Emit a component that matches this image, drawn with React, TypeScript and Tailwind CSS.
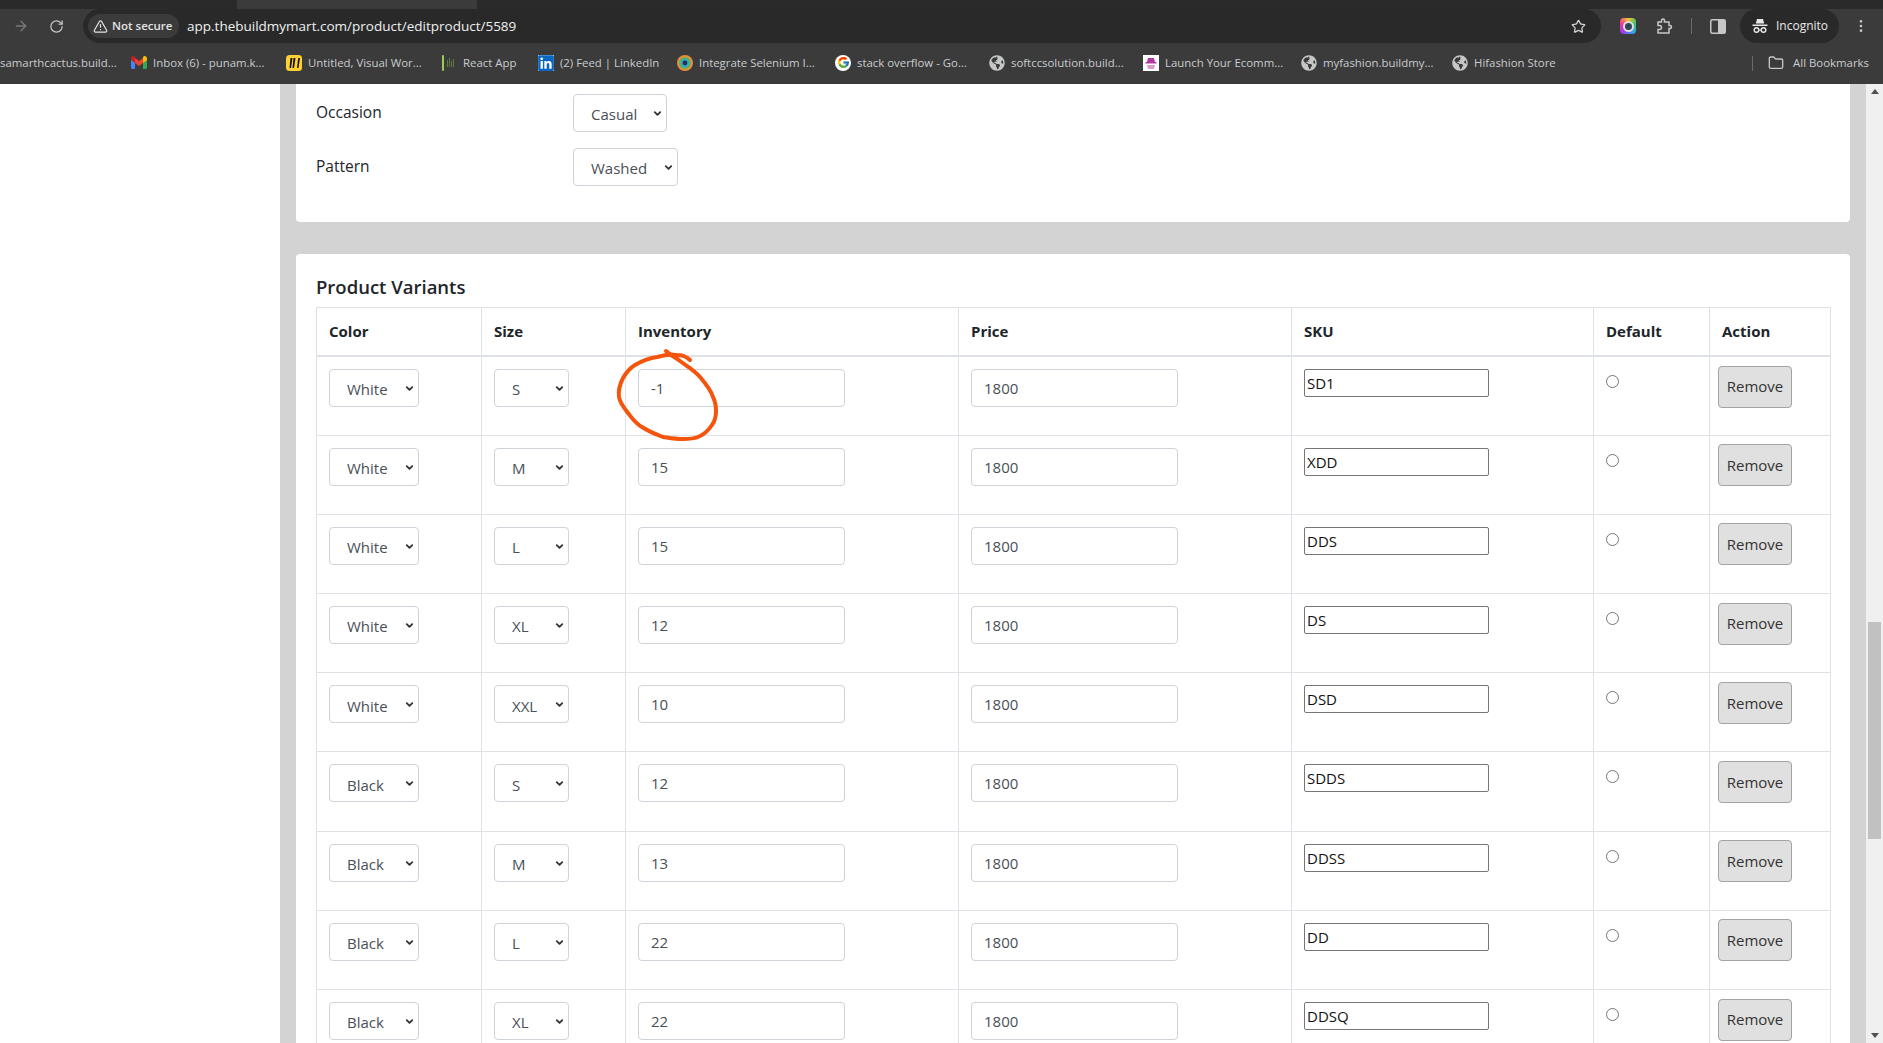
import {
  ArrowRight,
  ChevronDown,
  EllipsisVertical,
  Folder,
  RotateCw,
  Star,
  TriangleAlert,
} from "lucide-react";
import type { ReactNode } from "react";
import { FaGlobeAmericas, FaLinkedin } from "react-icons/fa";
import { FcGoogle } from "react-icons/fc";

const Globe = () => (
  <span className="flex h-4 w-4 shrink-0 items-center justify-center rounded-full bg-[#3b3b3b] text-[#c4c7c5]">
    <FaGlobeAmericas size={16} />
  </span>
);

const GmailIcon = () => (
  <svg width="16" height="13" viewBox="0 0 16 13" className="shrink-0">
    <path d="M0 2v9.5C0 12.3.7 13 1.5 13H4V6z" fill="#4285f4" />
    <path d="M16 2v9.5c0 .8-.7 1.5-1.5 1.5H12V6z" fill="#34a853" />
    <path d="M4 7V2l4 3 4-3v5L8 10z" fill="#ea4335" />
    <path d="M0 2.5C0 .6 2-.6 3.400.4L4 .9V7L0 4z" fill="#c5221f" />
    <path d="M16 2.500C16 .6 14-.6 12.600.4L12 .9V7l4-3z" fill="#fbbc04" />
  </svg>
);

const MiroIcon = () => (
  <svg width="16" height="16" viewBox="0 0 16 16" className="shrink-0">
    <rect width="16" height="16" rx="3.500" fill="#ffd02f" />
    <path d="M10.500 3h2l-1 4.500L13.500 3h-1.200L11 13h1.500l1.500-10M7.500 3h2L8 13H6.500zM4.500 3h2L5 13H3.500z" fill="#111" />
  </svg>
);

const ReactAppIcon = () => (
  <svg width="16" height="16" viewBox="0 0 16 16" className="shrink-0">
    <rect x="1" y="0" width="2" height="16" rx="1" fill="#9ccc55" />
    <path d="M6 5h1v7H6zM8 3h1v9H8zM10 6h1v6h-1zM12 4h1v8h-1z" fill="#5d7a3c" />
  </svg>
);

const SeleniumIcon = () => (
  <svg width="16" height="16" viewBox="0 0 16 16" className="shrink-0">
    <circle cx="8" cy="8" r="8" fill="#ef8b3a" />
    <circle cx="8" cy="8" r="6" fill="#57b45a" />
    <circle cx="8" cy="8" r="4.200" fill="#35a3d8" />
    <circle cx="8" cy="8" r="2.400" fill="#26364a" />
  </svg>
);

const LaunchIcon = () => (
  <svg width="16" height="16" viewBox="0 0 16 16" className="shrink-0">
    <rect width="16" height="16" fill="#fff" />
    <path d="M4 7l1-4h6l1 4zM2.500 7h11v1.500h-11z" fill="#b0389e" />
    <path d="M4 10h8l-1 4H5z" fill="#d79bd0" />
  </svg>
);

const bookmarks: { icon: ReactNode; label: string; width: string }[] = [
  { icon: <GmailIcon />, label: "Inbox (6) - punam.k...", width: "w-[155px]" },
  { icon: <MiroIcon />, label: "Untitled, Visual Wor...", width: "w-[155px]" },
  { icon: <ReactAppIcon />, label: "React App", width: "w-[97px]" },
  {
    icon: (
      <span className="flex h-4 w-4 shrink-0 items-center justify-center bg-white text-[#0a66c2]">
        <FaLinkedin size={18} />
      </span>
    ),
    label: "(2) Feed | LinkedIn",
    width: "w-[139px]",
  },
  { icon: <SeleniumIcon />, label: "Integrate Selenium I...", width: "w-[158px]" },
  {
    icon: (
      <span className="flex h-4 w-4 shrink-0 items-center justify-center rounded-full bg-white">
        <FcGoogle size={13} />
      </span>
    ),
    label: "stack overflow - Go...",
    width: "w-[154px]",
  },
  { icon: <Globe />, label: "softccsolution.build...", width: "w-[154px]" },
  { icon: <LaunchIcon />, label: "Launch Your Ecomm...", width: "w-[158px]" },
  { icon: <Globe />, label: "myfashion.buildmy...", width: "w-[151px]" },
  { icon: <Globe />, label: "Hifashion Store", width: "w-[110px]" },
];

const variants = [
  { color: "White", size: "S", inventory: "-1", sku: "SD1" },
  { color: "White", size: "M", inventory: "15", sku: "XDD" },
  { color: "White", size: "L", inventory: "15", sku: "DDS" },
  { color: "White", size: "XL", inventory: "12", sku: "DS" },
  { color: "White", size: "XXL", inventory: "10", sku: "DSD" },
  { color: "Black", size: "S", inventory: "12", sku: "SDDS" },
  { color: "Black", size: "M", inventory: "13", sku: "DDSS" },
  { color: "Black", size: "L", inventory: "22", sku: "DD" },
  { color: "Black", size: "XL", inventory: "22", sku: "DDSQ" },
];

function Select({ value, width }: { value: string; width: string }) {
  return (
    <div className={`relative ${width}`}>
      <select
        defaultValue={value}
        className="block h-[38px] w-full appearance-none rounded border border-[#ced4da] bg-white pl-[17px] pt-[3px] text-[15px] text-[#495057]"
      >
        <option>{value}</option>
      </select>
      <ChevronDown
        size={11}
        strokeWidth={4}
        className="pointer-events-none absolute right-[4px] top-[14px] text-[#333]"
      />
    </div>
  );
}

function TextInput({ value }: { value: string }) {
  return (
    <input
      type="text"
      defaultValue={value}
      className="block h-[38px] w-[207px] rounded border border-[#ced4da] bg-white px-3 text-[15px] text-[#495057]"
    />
  );
}

function VariantRow({ variant }: { variant: (typeof variants)[number] }) {
  return (
    <tr className="h-[79.2px]">
      <td className="border border-[#dee2e6] p-3 align-top">
        <Select value={variant.color} width="w-[90px]" />
      </td>
      <td className="border border-[#dee2e6] p-3 align-top">
        <Select value={variant.size} width="w-[75px]" />
      </td>
      <td className="border border-[#dee2e6] p-3 align-top">
        <TextInput value={variant.inventory} />
      </td>
      <td className="border border-[#dee2e6] p-3 align-top">
        <TextInput value="1800" />
      </td>
      <td className="border border-[#dee2e6] p-3 align-top">
        <input
          type="text"
          defaultValue={variant.sku}
          className="block h-[28px] w-[185px] rounded-[2px] border border-[#767676] bg-white px-[2px] text-[15px] text-[#111]"
        />
      </td>
      <td className="border border-[#dee2e6] p-3 align-top">
        <input
          type="radio"
          name="default-variant"
          className="mt-[6px] block h-[13px] w-[13px] appearance-none rounded-full border border-[#767676] bg-white"
        />
      </td>
      <td className="border border-[#dee2e6] pl-2 pt-[8.5px] align-top">
        <button
          type="button"
          className="block h-[42px] w-[74px] rounded border border-[#a3a3a3] bg-[#e0e0e0] text-[15px] text-[#333]"
        >
          Remove
        </button>
      </td>
    </tr>
  );
}

function BrowserChrome() {
  return (
    <header className="shrink-0 bg-[#3b3b3b] font-['Open_Sans',sans-serif]">
      <div className="h-[9px] bg-[#2a2a2a]">
        <div className="ml-[237px] h-full w-[240px] bg-[#3b3b3b]" />
      </div>
      <div className="flex h-[34px] items-center">
        <div className="flex w-[83px] items-center gap-5 pl-[13px]">
          <ArrowRight size={16} className="text-[#7a7a7a]" />
          <RotateCw size={15} className="text-[#c7c7c7]" />
        </div>
        <div className="flex h-full w-[1518px] items-center rounded-full bg-[#292929] pl-[5px] pr-[15px]">
          <div className="flex h-6 w-[91px] items-center gap-1 rounded-full bg-[#3b3b3b] pl-[5px] text-[11.500px] font-semibold text-[#e3e3e3]">
            <TriangleAlert size={15} className="shrink-0" />
            Not secure
          </div>
          <span className="ml-2 text-[13.500px] text-[#eef0f2]">
            app.thebuildmymart.com/product/editproduct/5589
          </span>
          <Star size={15} className="ml-auto text-[#d5d5d5]" />
        </div>
        <span className="ml-[19px] flex h-4 w-4 items-center justify-center rounded bg-[conic-gradient(#f6c02c,#3ac569,#2ea6f0,#9a3df0,#f0349a,#f6c02c)]">
          <span className="h-[11px] w-[11px] rounded-full border-2 border-[#dddddd] bg-[#2f4658]" />
        </span>
        <svg width="16" height="16" viewBox="0 0 16 16" fill="none" stroke="#c7c7c7" strokeWidth="1.500" className="ml-[21px]">
          <path d="M1 4h3.500V2.500a1.500 1.500 0 0 1 3 0V4H12v3.500h1a1.500 1.500 0 0 1 0 3h-1V15H1v-3.500h1.500a2 2 0 0 0 0-4H1z" />
        </svg>
        <span className="ml-[18px] h-4 w-px bg-[#6a6a6a]" />
        <svg width="16" height="15" viewBox="0 0 16 15" className="ml-[18px]">
          <rect x="0.750" y="0.750" width="14.500" height="13.500" rx="1.500" fill="none" stroke="#c7c7c7" strokeWidth="1.500" />
          <rect x="8" y="1" width="7" height="13" fill="#c7c7c7" />
        </svg>
        <div className="ml-[14px] flex h-full w-[99px] items-center gap-[8px] rounded-full bg-[#292929] pl-[12px] text-[12px] text-[#e8e8e8]">
          <svg width="16" height="16" viewBox="0 0 16 16" fill="#e8e8e8" className="shrink-0">
            <path d="M5 1h6l1.200 4.500H3.800zM0.500 6.500h15V8H.5z" />
            <circle cx="4.500" cy="12" r="2.300" fill="none" stroke="#e8e8e8" strokeWidth="1.400" />
            <circle cx="11.500" cy="12" r="2.300" fill="none" stroke="#e8e8e8" strokeWidth="1.400" />
            <path d="M6.500 11.500h3v1h-3z" />
          </svg>
          Incognito
        </div>
        <EllipsisVertical size={16} className="ml-[14px] text-[#c7c7c7]" />
      </div>
      <div className="flex h-[41px] items-center whitespace-nowrap pb-px text-[11.400px] text-[#c9ccd0]">
        <div className="w-[131px] overflow-hidden pr-5 text-right">samarthcactus.build...</div>
        {bookmarks.map((bookmark) => (
          <div key={bookmark.label} className={`flex items-center gap-[6px] ${bookmark.width}`}>
            {bookmark.icon}
            <span>{bookmark.label}</span>
          </div>
        ))}
        <span className="ml-auto h-[15px] w-px bg-[#6a6a6a]" />
        <Folder size={16} className="ml-[15px] text-[#c7c7c7]" />
        <span className="ml-[9px] pr-[14px]">All Bookmarks</span>
      </div>
    </header>
  );
}

export default function App() {
  return (
    <div className="relative flex h-[1043px] w-full flex-col overflow-hidden bg-white font-['Open_Sans',sans-serif]">
      <BrowserChrome />
      <div className="flex min-h-0 flex-1">
        <aside className="w-[280px] shrink-0 bg-white" />
        <main className="min-w-0 flex-1 bg-[#d3d3d3] px-4">
          <section className="rounded-b bg-white px-5 pb-9 pt-[10px]">
            <div className="flex items-center">
              <label className="w-[257px] text-[15.500px] text-[#212529]">Occasion</label>
              <Select value="Casual" width="w-[94px]" />
            </div>
            <div className="mt-4 flex items-center">
              <label className="w-[257px] text-[15.500px] text-[#212529]">Pattern</label>
              <Select value="Washed" width="w-[105px]" />
            </div>
          </section>
          <section className="mt-[32px] rounded bg-white px-5 pt-[21px]">
            <h2 className="mb-2 h-6 text-[18.500px] font-semibold leading-6 text-[#212529]">Product Variants</h2>
            <table className="-mt-[0.5px] w-full table-fixed border-collapse text-[15px] text-[#212529]">
              <colgroup>
                <col className="w-[165px]" />
                <col className="w-[144px]" />
                <col className="w-[333px]" />
                <col className="w-[333px]" />
                <col className="w-[302px]" />
                <col className="w-[116px]" />
                <col className="w-[121px]" />
              </colgroup>
              <thead>
                <tr className="h-[49px]">
                  {["Color", "Size", "Inventory", "Price", "SKU", "Default", "Action"].map((title) => (
                    <th
                      key={title}
                      className="border border-b-2 border-[#dee2e6] px-3 text-left font-bold"
                    >
                      {title}
                    </th>
                  ))}
                </tr>
              </thead>
              <tbody>
                {variants.map((variant) => (
                  <VariantRow key={variant.color + variant.size} variant={variant} />
                ))}
              </tbody>
            </table>
          </section>
        </main>
        <div className="flex w-[17px] shrink-0 flex-col items-center justify-between bg-[#f0f0f0] py-[5px]">
          <span className="h-0 w-0 border-x-[4px] border-b-[5px] border-x-transparent border-b-[#505050]" />
          <span className="h-0 w-0 border-x-[4px] border-t-[5px] border-x-transparent border-t-[#505050]" />
        </div>
      </div>
      {/* scrollbar thumb */}
      <div className="absolute left-[1868px] top-[622px] h-[217px] w-[13px] bg-[#c1c1c1]" />
      {/* hand drawn mark around the inventory value */}
      <svg className="pointer-events-none absolute inset-0 h-full w-full" fill="none">
        <path
          d="M666 351 C671 356 675 357 680 361 C688 367 694 370 700 377 C706 384 711 390 713 397 C716 403 716 406 716 411 C716 418 715 421 712 425 C708 431 703 435 698 437 C693 439 688 439 683 439 C675 439 670 438 663 437 C655 434 648 431 642 427 C635 423 632 418 628 413 C624 408 620 403 619 397 C618 390 620 384 623 378 C626 373 630 368 635 365 C642 361 649 358 657 357 C664 355 670 354 677 355 C682 355 687 357 690 360"
          stroke="#f4540c"
          strokeWidth="4"
          strokeLinecap="round"
        />
      </svg>
    </div>
  );
}
